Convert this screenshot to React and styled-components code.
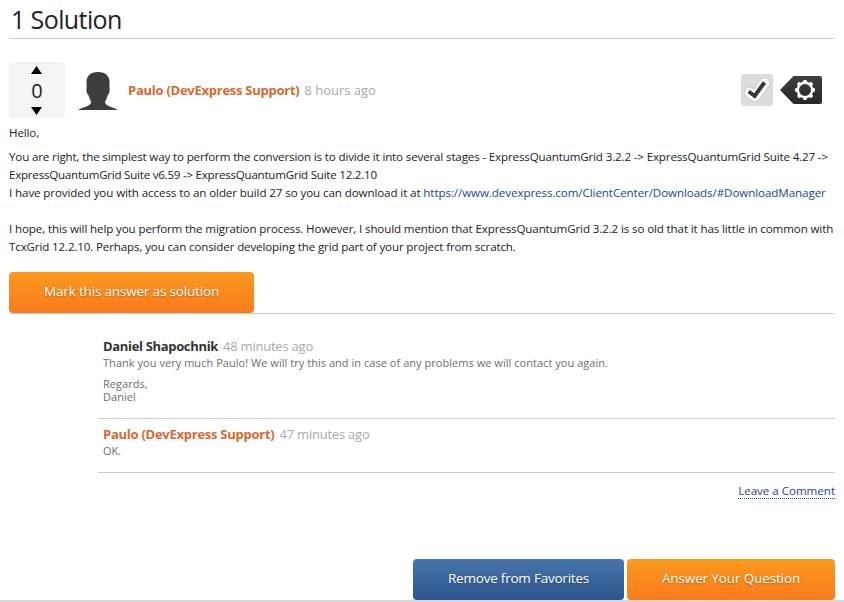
import React from 'react';
import styled, { createGlobalStyle } from 'styled-components';

const GlobalStyle = createGlobalStyle`
  * { box-sizing: border-box; }
  body {
    margin: 0;
    background: #fff;
    color: #222;
    font-family: "Open Sans", "Noto Sans", sans-serif;
  }
  p, h1 { margin: 0; }
`;

const Page = styled.main`
  display: flex;
  flex-direction: column;
  width: 844px;
  height: 602px;
  padding: 0 9px;
  overflow: hidden;
  border-bottom: 2px solid #d8d8d8;
`;

const Title = styled.h1`
  height: 39px;
  padding-left: 2px;
  border-bottom: 1px solid #ccc;
  font-size: 25px;
  line-height: 39px;
  font-weight: 400;
  letter-spacing: -0.6px;
  white-space: nowrap;
`;

const AnswerHeader = styled.header`
  display: flex;
  align-items: center;
  height: 56px;
  margin-top: 23px;
`;

const VoteBox = styled.div`
  display: flex;
  flex-direction: column;
  align-items: center;
  justify-content: space-between;
  width: 56px;
  height: 56px;
  padding: 4px 1px 3px 0;
  border-radius: 4px;
  background: #f4f4f4;
`;

const VoteArrow = styled.svg`
  display: block;
  width: 11px;
  height: 8px;
`;

const VoteCount = styled.span`
  padding-left: 1px;
  font-size: 20px;
  line-height: 28px;
`;

const Avatar = styled.svg`
  width: 40px;
  height: 38px;
  margin: 1px 10px 0 13px;
`;

const Byline = styled.div`
  display: flex;
  gap: ${(p) => p.$gap || 5}px;
  font-size: 13px;
  line-height: 18px;
  white-space: nowrap;
`;

const Author = styled.span`
  color: ${(p) => (p.$support ? '#d9682f' : '#333')};
  font-weight: 700;
  letter-spacing: ${(p) => p.$tracking}px;
`;

const Time = styled.span`
  color: #aaa;
  letter-spacing: ${(p) => p.$tracking}px;
`;

const Actions = styled.div`
  display: flex;
  align-items: center;
  gap: 7px;
  margin-left: auto;
  padding-right: 13px;
`;

const ActionIcon = styled.svg`
  display: block;
  width: ${(p) => p.$width}px;
  height: 32px;
`;

const Body = styled.div`
  margin-top: 6px;
  font-size: 11.6px;
  line-height: 18px;
`;

const Paragraph = styled.p`
  margin-bottom: ${(p) => p.$gap}px;
`;

const Line = styled.span`
  display: block;
  white-space: pre;
  letter-spacing: ${(p) => p.$tracking}px;
`;

const Link = styled.a`
  color: #1c439b;
  text-decoration: none;
  letter-spacing: ${(p) => p.$tracking}px;
`;

const Button = styled.button`
  display: block;
  width: ${(p) => p.$width}px;
  height: 41px;
  padding: 0 0 4px;
  border: 0;
  border-radius: 4px;
  color: #fff;
  background: ${(p) =>
    p.$blue
      ? 'linear-gradient(#4675ad, #2c568b)'
      : 'linear-gradient(#fa9a1e, #fb7a1d)'};
  font: 400 13.5px/20px "Open Sans", sans-serif;
  letter-spacing: ${(p) => p.$tracking}px;
  text-shadow: 0 1px 2px rgba(0, 0, 0, 0.3);
  white-space: nowrap;
`;

const SolutionBar = styled.div`
  height: 42px;
  margin-top: 16px;
  border-bottom: 1px solid #ccc;
`;

const Comments = styled.section`
  margin-left: 89px;
`;

const Comment = styled.article`
  height: ${(p) => p.$height}px;
  padding: ${(p) => p.$top}px 0 0 5px;
  border-bottom: 1px solid #ccc;
`;

const CommentText = styled.p`
  margin-top: ${(p) => p.$top || 0}px;
  color: #6e6e6e;
  font-size: 11px;
  line-height: 13px;
  white-space: nowrap;
  letter-spacing: ${(p) => p.$tracking}px;
`;

const LeaveComment = styled.a`
  align-self: flex-end;
  height: 16px;
  margin-top: 10px;
  border-bottom: 1px dotted #1c439b;
  color: #1c439b;
  font-size: 11.6px;
  line-height: 16px;
  letter-spacing: -0.03px;
`;

const Footer = styled.footer`
  display: flex;
  justify-content: flex-end;
  gap: 3px;
  margin-top: auto;
`;

function SupportAvatar() {
  return (
    <Avatar viewBox="0 0 40 38">
      <path
        fill="#3d3d3d"
        d="M20 0C12.500 0 8.500 4 8.500 10C8.500 12 8.600 13.600 8.800 15C7.900 18 8.800 22 10.600 23.500C11.400 26.500 12.700 28.700 13.200 30C13.200 34 5 35 0 38H40C35 35 27 34 27 30C27.500 28.700 28.800 26.500 29.600 23.500C31.400 22 32.200 18 31.300 15C31.500 13.600 31.600 12 31.600 10C31.600 4 27.500 0 20 0Z"
      />
    </Avatar>
  );
}

function CheckIcon() {
  return (
    <ActionIcon $width={32} viewBox="0 0 32 32">
      <rect width="32" height="32" rx="3" fill="#dcdcdc" />
      <g fill="none" strokeLinejoin="round">
        <path d="M8.500 18.200L14 22.500L23.500 9" stroke="#c4c4c4" strokeWidth="11" strokeLinecap="round" />
        <path d="M8.500 18.200L14 22.500L23.500 9" stroke="#fff" strokeWidth="9.600" strokeLinecap="round" />
        <path d="M7.700 17.500L13.700 22L23.500 8.500" stroke="#383838" strokeWidth="4" strokeLinejoin="miter" />
      </g>
    </ActionIcon>
  );
}

const TEETH = [0, 45, 90, 135, 180, 225, 270, 315];

function GearTag() {
  return (
    <ActionIcon $width={42} viewBox="0 0 42 32">
      <defs>
        <linearGradient id="tag" x2="0" y2="1">
          <stop stopColor="#3e3e3e" />
          <stop offset="1" stopColor="#282828" />
        </linearGradient>
      </defs>
      <path d="M0 16L13.500 2H40Q42 2 42 4V28Q42 30 40 30H13.500Z" fill="url(#tag)" />
      <circle cx="25" cy="16" r="7.200" fill="none" stroke="#fff" strokeWidth="2.400" />
      {TEETH.map((angle) => (
        <path
          key={angle}
          d="M22.800 8.800L23.500 6H26.500L27.200 8.800Z"
          fill="#fff"
          transform={`rotate(${angle} 25 16)`}
        />
      ))}
    </ActionIcon>
  );
}

export default function App() {
  return (
    <>
      <GlobalStyle />
      <Page>
        <Title>1 Solution</Title>
        <AnswerHeader>
          <VoteBox>
            <VoteArrow viewBox="0 0 11 8"><path d="M5.500 0L11 8H0Z" /></VoteArrow>
            <VoteCount>0</VoteCount>
            <VoteArrow viewBox="0 0 11 8"><path d="M0 0H11L5.500 8Z" /></VoteArrow>
          </VoteBox>
          <SupportAvatar />
          <Byline>
            <Author $support $tracking={-0.255}>Paulo (DevExpress Support)</Author>
            <Time $tracking={-0.03}>8 hours ago</Time>
          </Byline>
          <Actions>
            <CheckIcon />
            <GearTag />
          </Actions>
        </AnswerHeader>
        <Body>
          <Paragraph $gap={6}>
            <Line $tracking={-0.15}>Hello,</Line>
          </Paragraph>
          <Paragraph $gap={18}>
            <Line $tracking={-0.153}>
              {'You are right, the simplest way to perform the conversion is to divide it into several stages - ExpressQuantumGrid 3.2.2 -> ExpressQuantumGrid Suite 4.27 ->'}
            </Line>
            <Line $tracking={-0.245}>
              {'ExpressQuantumGrid Suite v6.59 -> ExpressQuantumGrid Suite 12.2.10'}
            </Line>
            <Line $tracking={-0.106}>
              {'I have provided you with access to an older build 27 so you can download it at '}
              <Link $tracking={-0.085}>https://www.devexpress.com/ClientCenter/Downloads/#DownloadManager</Link>
            </Line>
          </Paragraph>
          <Paragraph $gap={0}>
            <Line $tracking={-0.131}>
              I hope, this will help you perform the migration process. However, I should mention that ExpressQuantumGrid 3.2.2 is so old that it has little in common with
            </Line>
            <Line $tracking={-0.145}>
              TcxGrid 12.2.10. Perhaps, you can consider developing the grid part of your project from scratch.
            </Line>
          </Paragraph>
        </Body>
        <SolutionBar>
          <Button $width={245} $tracking={-0.17}>Mark this answer as solution</Button>
        </SolutionBar>
        <Comments>
          <Comment $height={105} $top={23}>
            <Byline $gap={5}>
              <Author $tracking={-0.332}>Daniel Shapochnik</Author>
              <Time $tracking={-0.222}>48 minutes ago</Time>
            </Byline>
            <CommentText $tracking={0.038} $top={1}>
              Thank you very much Paulo! We will try this and in case of any problems we will contact you again.
            </CommentText>
            <CommentText $tracking={0.04} $top={8}>
              Regards,
              <br />
              Daniel
            </CommentText>
          </Comment>
          <Comment $height={54} $top={6}>
            <Byline>
              <Author $support $tracking={-0.255}>Paulo (DevExpress Support)</Author>
              <Time $tracking={-0.222}>47 minutes ago</Time>
            </Byline>
            <CommentText $tracking={-0.1} $top={1}>OK.</CommentText>
          </Comment>
        </Comments>
        <LeaveComment>Leave a Comment</LeaveComment>
        <Footer>
          <Button $blue $width={211} $tracking={-0.22}>Remove from Favorites</Button>
          <Button $width={208} $tracking={-0.13}>Answer Your Question</Button>
        </Footer>
      </Page>
    </>
  );
}
